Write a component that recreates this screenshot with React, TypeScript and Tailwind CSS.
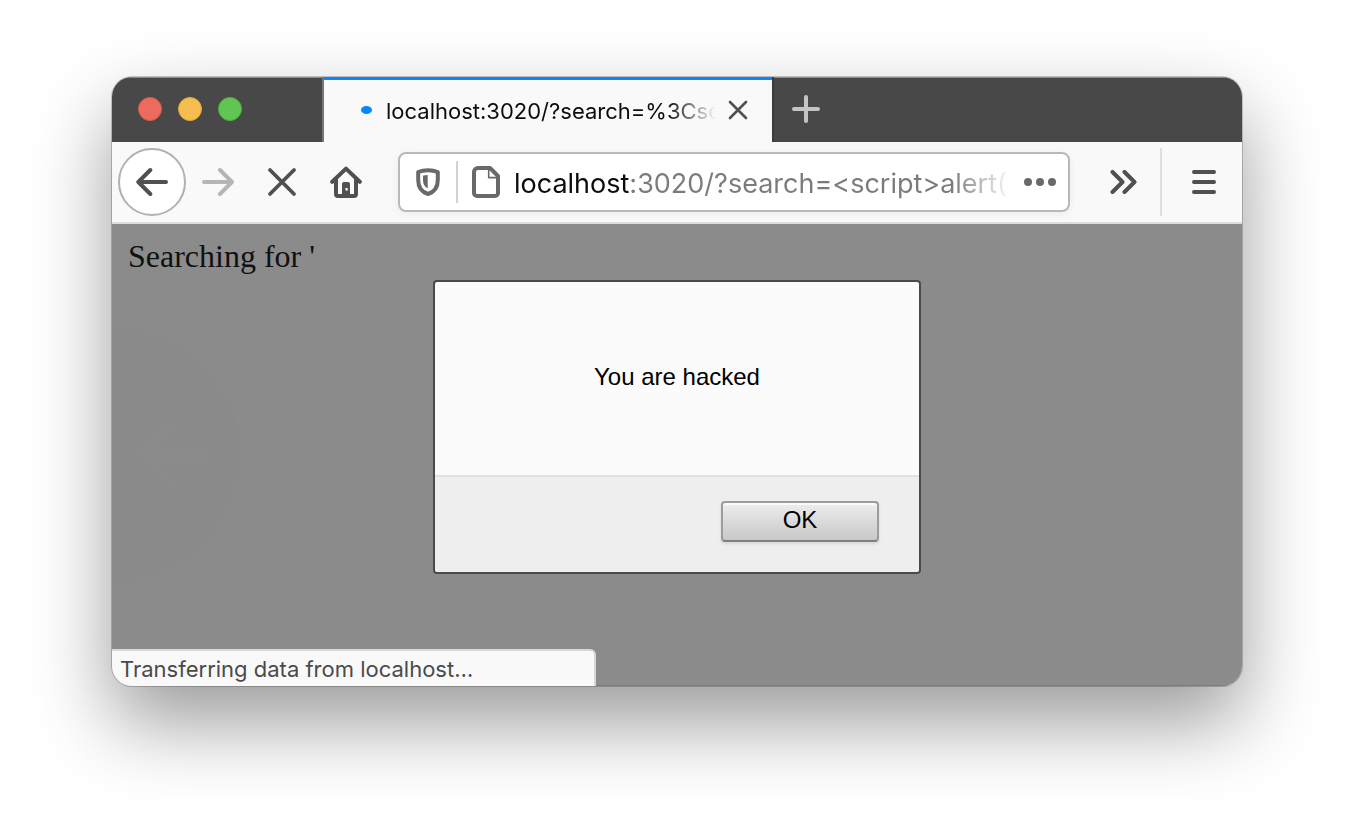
import React from 'react';

function TitleBar() {
  return (
    <header className="flex h-[65px] bg-[#484848] shadow-[inset_0_1px_0_#8a8a8a]">
      <div className="flex w-[212px] shrink-0 items-center gap-4 border-r-2 border-[#767676] pb-[2px] pl-[26px]">
        <button type="button" aria-label="Close window" className="size-6 rounded-full border border-[#d95a4f] bg-[#ed6a5e]" />
        <button type="button" aria-label="Minimize window" className="size-6 rounded-full border border-[#dba643] bg-[#f5bf4f]" />
        <button type="button" aria-label="Zoom window" className="size-6 rounded-full border border-[#53ac46] bg-[#61c554]" />
      </div>
      <div className="flex w-[448px] items-center border-t-[3px] border-[#0a84ff] bg-[#f9f9fa] pb-[2px] pl-[37px] pr-6">
        <span className="mr-[14px] h-2 w-[11px] shrink-0 rounded-[50%] bg-[#0a84ff]" />
        <span className="min-w-0 flex-1 overflow-hidden whitespace-nowrap pt-[2px] text-[22px] leading-8 text-[#0c0c0d] [mask-image:linear-gradient(to_left,transparent,black_48px)]">
          localhost:3020/?search=%3Csc
        </span>
        <button type="button" aria-label="Close tab" className="ml-3 shrink-0">
          <svg className="size-5" viewBox="0 0 20 20" fill="none" stroke="#505054" strokeWidth="2.600" strokeLinecap="round">
            <path d="M2 2l16 16M18 2L2 18" />
          </svg>
        </button>
      </div>
      <button type="button" aria-label="New tab" className="flex w-[66px] items-center justify-center border-l-2 border-[#3c3c3c] pb-[2px]">
        <svg className="size-7" viewBox="0 0 28 28" fill="none" stroke="#c4c4c4" strokeWidth="4" strokeLinecap="round">
          <path d="M14 2v24M2 14h24" />
        </svg>
      </button>
    </header>
  );
}

function Toolbar() {
  return (
    <nav className="flex h-[82px] items-center border-b-2 border-[#dcdcdd] bg-[#f9f9fa] pl-[6px]">
      <button type="button" aria-label="Back" className="flex size-17 shrink-0 items-center justify-center rounded-full border-2 border-[#b1b1b1] bg-white">
        <svg className="size-8" viewBox="0 0 32 32" fill="none" stroke="#505052" strokeWidth="4" strokeLinecap="round" strokeLinejoin="round">
          <path d="M14.300 4L2.300 16l12 12M2.300 16H30" />
        </svg>
      </button>
      <button type="button" aria-label="Forward" disabled className="flex w-16 shrink-0 items-center justify-center">
        <svg className="size-8" viewBox="0 0 32 32" fill="none" stroke="#b5b5b6" strokeWidth="4" strokeLinecap="round" strokeLinejoin="round">
          <path d="M18 4l12 12-12 12M30 16H2" />
        </svg>
      </button>
      <button type="button" aria-label="Stop loading" className="flex w-16 shrink-0 items-center justify-center">
        <svg className="size-8" viewBox="0 0 32 32" fill="none" stroke="#505052" strokeWidth="3.800" strokeLinecap="round">
          <path d="M4 4l24 24M28 4L4 28" />
        </svg>
      </button>
      <button type="button" aria-label="Home" className="flex w-16 shrink-0 items-center justify-center">
        <svg className="size-8" viewBox="0 0 32 32" fill="none" stroke="#505052" strokeWidth="4" strokeLinecap="round" strokeLinejoin="round">
          <path d="M2.200 15.800L16 2.600l13.800 13.200" />
          <path d="M6 14v14a2 2 0 0 0 2 2h16a2 2 0 0 0 2-2V14" />
          <path d="M12 30V18a2 2 0 0 1 2-2h4a2 2 0 0 1 2 2v12z" fill="#505052" stroke="none" />
          <rect x="15.500" y="22" width="2.200" height="2.600" fill="#f9f9fa" stroke="none" />
        </svg>
      </button>
      <div className="ml-5 flex h-15 min-w-0 flex-1 items-center rounded-lg border-2 border-[#b9b9ba] bg-white shadow-[0_2px_8px_rgba(0,0,0,0.06)]">
        <button type="button" aria-label="Tracking protection" className="flex w-14 shrink-0 items-center justify-center">
          <svg className="h-7 w-6" viewBox="0 0 24 28" fill="none" stroke="#69696b" strokeWidth="4" strokeLinejoin="round">
            <path d="M12 2.200C8.500 2.200 5 2.800 2.200 4v8c0 7 3.300 12 9.800 14 6.500-2 9.800-7 9.800-14V4C19 2.800 15.500 2.200 12 2.200z" />
            <path d="M11.700 7C10 7 8.300 7.200 7 7.700V12c0 3.800 1.500 6.700 4.700 8.500z" fill="#69696b" stroke="none" />
          </svg>
        </button>
        <span className="h-[42px] w-[2px] shrink-0 bg-[#d2d2d3]" />
        <button type="button" aria-label="Site information" className="ml-[14px] shrink-0">
          <svg className="h-8 w-7" viewBox="0 0 28 32" fill="none" stroke="#69696b" strokeWidth="4" strokeLinejoin="round">
            <path d="M6 2h12l8 8v17a3 3 0 0 1-3 3H5a3 3 0 0 1-3-3V6a4 4 0 0 1 4-4z" />
            <path d="M16.700 3v8.600H26" strokeWidth="1.600" />
          </svg>
        </button>
        <input
          type="text"
          aria-label="Address"
          defaultValue="localhost:3020/?search=<script>alert('You are hacked')</script>"
          className="ml-[14px] h-12 min-w-0 flex-1 bg-[linear-gradient(to_right,#0c0c0d_115px,#7b7b7c_115px,#7b7b7c_calc(100%-60px),transparent)] bg-clip-text pt-[2px] text-[27px] text-transparent outline-none"
        />
        <button type="button" aria-label="Page actions" className="flex w-14 shrink-0 items-center justify-center">
          <svg className="h-2 w-8" viewBox="0 0 32 8" fill="#69696b">
            <circle cx="4" cy="4" r="4" />
            <circle cx="16" cy="4" r="4" />
            <circle cx="28" cy="4" r="4" />
          </svg>
        </button>
      </div>
      <button type="button" aria-label="More tools" className="ml-[38px] flex w-8 shrink-0 items-center justify-center">
        <svg className="h-6 w-7" viewBox="0 0 28 24" fill="none" stroke="#505052" strokeWidth="4" strokeLinecap="round" strokeLinejoin="round">
          <path d="M2.500 2l10 10-10 10M14.500 2l10 10-10 10" />
        </svg>
      </button>
      <span className="ml-5 h-17 w-[2px] shrink-0 bg-[#dfdfe0]" />
      <button type="button" aria-label="Open menu" className="flex w-20 shrink-0 items-center justify-center pl-1">
        <svg className="h-6 w-6" viewBox="0 0 24 24" fill="none" stroke="#505052" strokeWidth="4" strokeLinecap="round">
          <path d="M2 2h20M2 12h20M2 22h20" />
        </svg>
      </button>
    </nav>
  );
}

function AlertDialog() {
  return (
    <div role="alertdialog" aria-labelledby="alert-message" className="w-[488px] rounded border-2 border-[#4a4a4a] bg-[#fbfbfb] font-['Liberation_Sans',sans-serif] text-2xl text-black">
      <p id="alert-message" className="flex h-[193px] items-center justify-center pb-1">
        You are hacked
      </p>
      <div className="flex h-[97px] justify-end rounded-b-sm border-t-2 border-[#e1e1e1] bg-[#eeeeee] pr-10 pt-6">
        <button
          type="button"
          className="flex h-[41px] w-[158px] items-center justify-center rounded-[4px] border-2 border-[#9c9c9c] border-b-[#808080] bg-linear-to-b from-[#eeeeee] to-[#c8c8c8] pb-1 shadow-[0_2px_3px_rgba(0,0,0,0.1),inset_0_2px_0_#fafafa]"
        >
          OK
        </button>
      </div>
    </div>
  );
}

export default function App() {
  return (
    <div className="flex min-h-screen bg-white px-28 pb-37 pt-[77px] font-['Inter',sans-serif]">
      <div className="flex min-w-0 flex-1 flex-col overflow-hidden rounded-[20px] shadow-[0_0_0_1px_rgba(0,0,0,0.2),0_36px_80px_rgba(0,0,0,0.4)]">
        <TitleBar />
        <Toolbar />
        <main className="relative flex flex-1 flex-col justify-between overflow-hidden bg-[#8b8b8b] shadow-[inset_0_-1px_0_#7c7c7c]">
          <svg className="absolute left-0 top-[103px] h-64 w-32" viewBox="0 0 128 256" fill="none" aria-hidden="true">
            <circle cx="0" cy="128" r="128" fill="#8a8a8a" />
            <path d="M58 101L31 128l27 26M31 128h62" stroke="#8b8b8b" strokeWidth="8" strokeLinecap="round" />
          </svg>
          <p className="relative px-4 pt-[14px] font-['Liberation_Serif',serif] text-[32px] leading-9 text-[#101010]">Searching for '</p>
          <div className="absolute inset-x-0 top-14 flex justify-center">
            <AlertDialog />
          </div>
          <p role="status" className="relative h-[37px] w-[484px] rounded-tr-md border-r-2 border-t-2 border-[#d8d8d8] bg-[#f9f9fa] pl-2 text-[22px] leading-9 text-[#4a4a4b]">
            Transferring data from localhost…
          </p>
        </main>
      </div>
    </div>
  );
}
